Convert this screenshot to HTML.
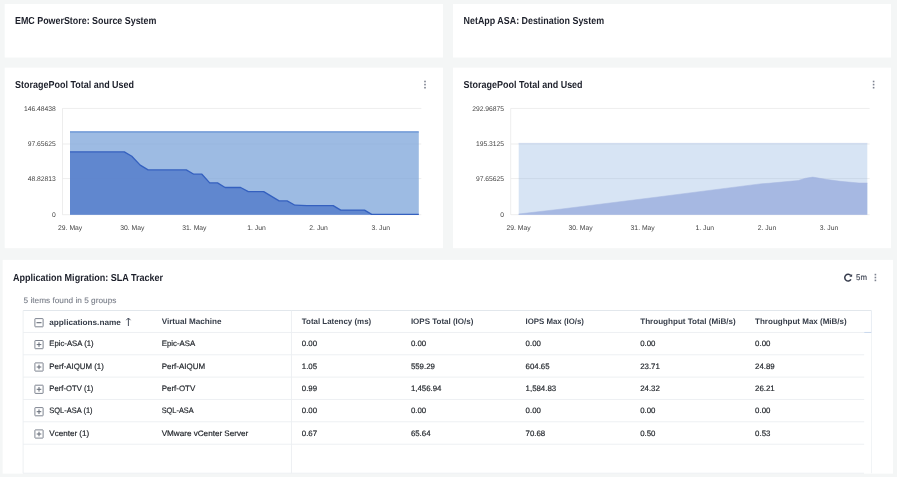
<!DOCTYPE html>
<html lang="en"><head><meta charset="utf-8"><title>Migration Dashboard</title>
<style>html,body{margin:0;padding:0;background:#f4f6f6;overflow:hidden}svg{display:block;text-rendering:geometricPrecision;will-change:transform}text{font-family:"Liberation Sans",sans-serif}</style>
</head><body>
<svg width="897" height="477" viewBox="0 0 897 477">
<rect x="0" y="0" width="897" height="477" fill="#f4f6f6"/>
<rect x="4.70" y="4.00" width="438.30" height="53.50" fill="#ffffff"/>
<rect x="453.00" y="4.00" width="438.00" height="53.50" fill="#ffffff"/>
<rect x="4.70" y="67.60" width="438.30" height="180.60" fill="#ffffff"/>
<rect x="453.00" y="67.60" width="438.00" height="180.60" fill="#ffffff"/>
<rect x="2.60" y="259.90" width="890.40" height="213.70" fill="#ffffff"/>
<text x="15.00" y="24.10" font-size="10.20" font-weight="bold" fill="#1c1f2a" text-anchor="start" textLength="141.40" lengthAdjust="spacingAndGlyphs">EMC PowerStore: Source System</text>
<text x="463.60" y="24.00" font-size="10.20" font-weight="bold" fill="#1c1f2a" text-anchor="start" textLength="140.50" lengthAdjust="spacingAndGlyphs">NetApp ASA: Destination System</text>
<text x="15.05" y="87.80" font-size="10.20" font-weight="bold" fill="#1c1f2a" text-anchor="start" textLength="119.00" lengthAdjust="spacingAndGlyphs">StoragePool Total and Used</text>
<text x="463.60" y="87.80" font-size="10.20" font-weight="bold" fill="#1c1f2a" text-anchor="start" textLength="119.00" lengthAdjust="spacingAndGlyphs">StoragePool Total and Used</text>
<text x="13.00" y="281.30" font-size="10.20" font-weight="bold" fill="#1c1f2a" text-anchor="start" textLength="150.00" lengthAdjust="spacingAndGlyphs">Application Migration: SLA Tracker</text>
<rect x="424.20" y="80.70" width="1.60" height="1.60" fill="#7d8290"/>
<rect x="424.20" y="83.80" width="1.60" height="1.60" fill="#7d8290"/>
<rect x="424.20" y="86.90" width="1.60" height="1.60" fill="#7d8290"/>
<rect x="872.80" y="80.70" width="1.60" height="1.60" fill="#7d8290"/>
<rect x="872.80" y="83.80" width="1.60" height="1.60" fill="#7d8290"/>
<rect x="872.80" y="86.90" width="1.60" height="1.60" fill="#7d8290"/>
<rect x="874.60" y="273.80" width="1.60" height="1.60" fill="#7d8290"/>
<rect x="874.60" y="276.70" width="1.60" height="1.60" fill="#7d8290"/>
<rect x="874.60" y="279.60" width="1.60" height="1.60" fill="#7d8290"/>
<rect x="62.50" y="107.95" width="358.80" height="0.7" fill="#e6e6e6"/>
<rect x="62.50" y="143.65" width="358.80" height="0.7" fill="#e6e6e6"/>
<rect x="62.50" y="178.35" width="358.80" height="0.7" fill="#e6e6e6"/>
<rect x="62.50" y="214.45" width="358.80" height="0.7" fill="#e6e6e6"/>
<rect x="62.15" y="108.30" width="0.7" height="106.50" fill="#e6e6e6"/>
<text x="55.80" y="110.65" font-size="6.75" font-weight="normal" fill="#444444" text-anchor="end">146.48438</text>
<text x="55.80" y="146.35" font-size="6.75" font-weight="normal" fill="#444444" text-anchor="end">97.65625</text>
<text x="55.80" y="181.05" font-size="6.75" font-weight="normal" fill="#444444" text-anchor="end">48.82813</text>
<text x="55.80" y="217.15" font-size="6.75" font-weight="normal" fill="#444444" text-anchor="end">0</text>
<text x="70.20" y="229.90" font-size="6.80" font-weight="normal" fill="#444444" text-anchor="middle">29. May</text>
<text x="132.30" y="229.90" font-size="6.80" font-weight="normal" fill="#444444" text-anchor="middle">30. May</text>
<text x="194.40" y="229.90" font-size="6.80" font-weight="normal" fill="#444444" text-anchor="middle">31. May</text>
<text x="256.50" y="229.90" font-size="6.80" font-weight="normal" fill="#444444" text-anchor="middle">1. Jun</text>
<text x="318.60" y="229.90" font-size="6.80" font-weight="normal" fill="#444444" text-anchor="middle">2. Jun</text>
<text x="380.70" y="229.90" font-size="6.80" font-weight="normal" fill="#444444" text-anchor="middle">3. Jun</text>
<path d="M70.00 214.80 L70.00 131.90 L418.80 131.90 L418.80 214.80 Z" fill="rgba(124,164,217,0.75)"/>
<path d="M70.00 131.90 L418.80 131.90" fill="none" stroke="#5f8dd2" stroke-width="1.40" stroke-linejoin="round"/>
<path d="M70.00 214.80 L70.00 151.90 L124.30 151.90 L131.80 156.30 L140.20 165.10 L148.10 169.90 L186.30 169.90 L193.80 174.20 L201.90 174.20 L209.70 182.90 L217.50 182.90 L225.10 187.50 L240.60 187.50 L248.30 191.60 L263.70 191.60 L279.10 200.90 L287.10 200.90 L295.00 205.20 L307.00 205.60 L333.20 205.60 L340.70 210.10 L364.50 210.10 L371.70 214.40 L418.80 214.40 L418.80 214.80 Z" fill="rgba(86,126,203,0.85)"/>
<path d="M70.00 151.90 L124.30 151.90 L131.80 156.30 L140.20 165.10 L148.10 169.90 L186.30 169.90 L193.80 174.20 L201.90 174.20 L209.70 182.90 L217.50 182.90 L225.10 187.50 L240.60 187.50 L248.30 191.60 L263.70 191.60 L279.10 200.90 L287.10 200.90 L295.00 205.20 L307.00 205.60 L333.20 205.60 L340.70 210.10 L364.50 210.10 L371.70 214.40 L418.80 214.40" fill="none" stroke="#3460bf" stroke-width="1.30" stroke-linejoin="round"/>
<rect x="510.80" y="107.95" width="358.80" height="0.7" fill="#e6e6e6"/>
<rect x="510.80" y="143.65" width="358.80" height="0.7" fill="#e6e6e6"/>
<rect x="510.80" y="178.35" width="358.80" height="0.7" fill="#e6e6e6"/>
<rect x="510.80" y="214.45" width="358.80" height="0.7" fill="#e6e6e6"/>
<rect x="510.45" y="108.30" width="0.7" height="106.50" fill="#e6e6e6"/>
<text x="504.10" y="110.65" font-size="6.75" font-weight="normal" fill="#444444" text-anchor="end">292.96875</text>
<text x="504.10" y="146.35" font-size="6.75" font-weight="normal" fill="#444444" text-anchor="end">195.3125</text>
<text x="504.10" y="181.05" font-size="6.75" font-weight="normal" fill="#444444" text-anchor="end">97.65625</text>
<text x="504.10" y="217.15" font-size="6.75" font-weight="normal" fill="#444444" text-anchor="end">0</text>
<text x="518.50" y="229.90" font-size="6.80" font-weight="normal" fill="#444444" text-anchor="middle">29. May</text>
<text x="580.60" y="229.90" font-size="6.80" font-weight="normal" fill="#444444" text-anchor="middle">30. May</text>
<text x="642.70" y="229.90" font-size="6.80" font-weight="normal" fill="#444444" text-anchor="middle">31. May</text>
<text x="704.80" y="229.90" font-size="6.80" font-weight="normal" fill="#444444" text-anchor="middle">1. Jun</text>
<text x="766.90" y="229.90" font-size="6.80" font-weight="normal" fill="#444444" text-anchor="middle">2. Jun</text>
<text x="829.00" y="229.90" font-size="6.80" font-weight="normal" fill="#444444" text-anchor="middle">3. Jun</text>
<path d="M518.70 214.80 L518.70 143.40 L867.30 143.40 L867.30 214.80 Z" fill="rgba(124,164,217,0.30)"/>
<path d="M518.70 143.40 L867.30 143.40" fill="none" stroke="#c9d6ee" stroke-width="0.80" stroke-linejoin="round"/>
<path d="M518.70 214.80 L518.70 214.00 L560.00 209.20 L660.00 196.70 L760.00 183.90 L768.30 183.30 L798.30 180.50 L805.30 178.30 L812.80 177.10 L827.00 179.50 L840.30 181.30 L858.90 183.00 L867.30 183.00 L867.30 214.80 Z" fill="rgba(150,170,220,0.75)"/>
<path d="M518.70 214.00 L560.00 209.20 L660.00 196.70 L760.00 183.90 L768.30 183.30 L798.30 180.50 L805.30 178.30 L812.80 177.10 L827.00 179.50 L840.30 181.30 L858.90 183.00 L867.30 183.00" fill="none" stroke="#a6b7e1" stroke-width="0.50" stroke-linejoin="round"/>
<rect x="23.10" y="310.05" width="848.30" height="0.9" fill="#dfe5ea"/>
<rect x="22.65" y="310.50" width="0.9" height="162.70" fill="#ebeef1"/>
<rect x="870.95" y="310.50" width="0.9" height="21.90" fill="#e6ecf2"/>
<rect x="870.95" y="332.40" width="0.9" height="140.80" fill="#eff2f5"/>
<rect x="23.10" y="472.75" width="840.90" height="0.9" fill="#ebeef1"/>
<rect x="23.10" y="331.95" width="841.10" height="0.9" fill="#ebeef1"/>
<rect x="23.10" y="354.35" width="841.10" height="0.9" fill="#ebeef1"/>
<rect x="23.10" y="376.65" width="841.10" height="0.9" fill="#ebeef1"/>
<rect x="23.10" y="398.95" width="841.10" height="0.9" fill="#ebeef1"/>
<rect x="23.10" y="421.35" width="841.10" height="0.9" fill="#ebeef1"/>
<rect x="23.10" y="443.75" width="841.10" height="0.9" fill="#ebeef1"/>
<rect x="864.2" y="331.95" width="7.2" height="0.9" fill="#c3d3ea"/>
<rect x="290.95" y="310.50" width="0.9" height="162.70" fill="#ebeef1"/>
<text x="23.50" y="303.20" font-size="8.00" font-weight="normal" fill="#777c87" text-anchor="start" stroke="#777c87" stroke-width="0.10" textLength="92.90" lengthAdjust="spacingAndGlyphs">5 items found in 5 groups</text>
<text x="49.30" y="324.90" font-size="8.00" font-weight="bold" fill="#373e4a" text-anchor="start" textLength="71.50" lengthAdjust="spacingAndGlyphs">applications.name</text>
<text x="161.70" y="323.80" font-size="8.00" font-weight="bold" fill="#373e4a" text-anchor="start" textLength="59.80" lengthAdjust="spacingAndGlyphs">Virtual Machine</text>
<text x="301.80" y="323.80" font-size="8.00" font-weight="bold" fill="#373e4a" text-anchor="start" textLength="69.40" lengthAdjust="spacingAndGlyphs">Total Latency (ms)</text>
<text x="410.90" y="323.80" font-size="8.00" font-weight="bold" fill="#373e4a" text-anchor="start" textLength="62.50" lengthAdjust="spacingAndGlyphs">IOPS Total (IO/s)</text>
<text x="525.60" y="323.80" font-size="8.00" font-weight="bold" fill="#373e4a" text-anchor="start" textLength="58.30" lengthAdjust="spacingAndGlyphs">IOPS Max (IO/s)</text>
<text x="640.20" y="323.80" font-size="8.00" font-weight="bold" fill="#373e4a" text-anchor="start" textLength="95.50" lengthAdjust="spacingAndGlyphs">Throughput Total (MiB/s)</text>
<text x="755.10" y="323.80" font-size="8.00" font-weight="bold" fill="#373e4a" text-anchor="start" textLength="91.60" lengthAdjust="spacingAndGlyphs">Throughput Max (MiB/s)</text>
<path d="M128.4 326.0 V318.0 M126.3 320.2 L128.4 318.0 L130.5 320.2" fill="none" stroke="#4b5260" stroke-width="1.0"/>
<rect x="34.90" y="318.60" width="8.2" height="8.2" rx="0.4" fill="#fff" stroke="#7f8591" stroke-width="1.0"/>
<path d="M36.50 322.70 h5.0" stroke="#626975" stroke-width="1.1" fill="none"/>
<rect x="34.90" y="340.50" width="8.2" height="8.2" rx="0.4" fill="#fff" stroke="#7f8591" stroke-width="1.0"/>
<path d="M36.70 344.60 h4.6 M39.00 342.30 v4.6" stroke="#626975" stroke-width="1.0" fill="none"/>
<text x="49.30" y="346.10" font-size="7.85" font-weight="normal" fill="#1f2329" text-anchor="start" stroke="#1f2329" stroke-width="0.18" textLength="44.30" lengthAdjust="spacingAndGlyphs">Epic-ASA (1)</text>
<text x="161.70" y="346.10" font-size="7.85" font-weight="normal" fill="#1f2329" text-anchor="start" stroke="#1f2329" stroke-width="0.18" textLength="33.50" lengthAdjust="spacingAndGlyphs">Epic-ASA</text>
<text x="301.80" y="346.10" font-size="7.85" font-weight="normal" fill="#1f2329" text-anchor="start" stroke="#1f2329" stroke-width="0.18">0.00</text>
<text x="410.90" y="346.10" font-size="7.85" font-weight="normal" fill="#1f2329" text-anchor="start" stroke="#1f2329" stroke-width="0.18">0.00</text>
<text x="525.60" y="346.10" font-size="7.85" font-weight="normal" fill="#1f2329" text-anchor="start" stroke="#1f2329" stroke-width="0.18">0.00</text>
<text x="640.20" y="346.10" font-size="7.85" font-weight="normal" fill="#1f2329" text-anchor="start" stroke="#1f2329" stroke-width="0.18">0.00</text>
<text x="755.10" y="346.10" font-size="7.85" font-weight="normal" fill="#1f2329" text-anchor="start" stroke="#1f2329" stroke-width="0.18">0.00</text>
<rect x="34.90" y="362.90" width="8.2" height="8.2" rx="0.4" fill="#fff" stroke="#7f8591" stroke-width="1.0"/>
<path d="M36.70 367.00 h4.6 M39.00 364.70 v4.6" stroke="#626975" stroke-width="1.0" fill="none"/>
<text x="49.30" y="368.50" font-size="7.85" font-weight="normal" fill="#1f2329" text-anchor="start" stroke="#1f2329" stroke-width="0.18" textLength="54.50" lengthAdjust="spacingAndGlyphs">Perf-AIQUM (1)</text>
<text x="161.70" y="368.50" font-size="7.85" font-weight="normal" fill="#1f2329" text-anchor="start" stroke="#1f2329" stroke-width="0.18" textLength="43.50" lengthAdjust="spacingAndGlyphs">Perf-AIQUM</text>
<text x="301.80" y="368.50" font-size="7.85" font-weight="normal" fill="#1f2329" text-anchor="start" stroke="#1f2329" stroke-width="0.18">1.05</text>
<text x="410.90" y="368.50" font-size="7.85" font-weight="normal" fill="#1f2329" text-anchor="start" stroke="#1f2329" stroke-width="0.18">559.29</text>
<text x="525.60" y="368.50" font-size="7.85" font-weight="normal" fill="#1f2329" text-anchor="start" stroke="#1f2329" stroke-width="0.18">604.65</text>
<text x="640.20" y="368.50" font-size="7.85" font-weight="normal" fill="#1f2329" text-anchor="start" stroke="#1f2329" stroke-width="0.18">23.71</text>
<text x="755.10" y="368.50" font-size="7.85" font-weight="normal" fill="#1f2329" text-anchor="start" stroke="#1f2329" stroke-width="0.18">24.89</text>
<rect x="34.90" y="385.20" width="8.2" height="8.2" rx="0.4" fill="#fff" stroke="#7f8591" stroke-width="1.0"/>
<path d="M36.70 389.30 h4.6 M39.00 387.00 v4.6" stroke="#626975" stroke-width="1.0" fill="none"/>
<text x="49.30" y="390.80" font-size="7.85" font-weight="normal" fill="#1f2329" text-anchor="start" stroke="#1f2329" stroke-width="0.18" textLength="44.00" lengthAdjust="spacingAndGlyphs">Perf-OTV (1)</text>
<text x="161.70" y="390.80" font-size="7.85" font-weight="normal" fill="#1f2329" text-anchor="start" stroke="#1f2329" stroke-width="0.18" textLength="33.50" lengthAdjust="spacingAndGlyphs">Perf-OTV</text>
<text x="301.80" y="390.80" font-size="7.85" font-weight="normal" fill="#1f2329" text-anchor="start" stroke="#1f2329" stroke-width="0.18">0.99</text>
<text x="410.90" y="390.80" font-size="7.85" font-weight="normal" fill="#1f2329" text-anchor="start" stroke="#1f2329" stroke-width="0.18">1,456.94</text>
<text x="525.60" y="390.80" font-size="7.85" font-weight="normal" fill="#1f2329" text-anchor="start" stroke="#1f2329" stroke-width="0.18">1,584.83</text>
<text x="640.20" y="390.80" font-size="7.85" font-weight="normal" fill="#1f2329" text-anchor="start" stroke="#1f2329" stroke-width="0.18">24.32</text>
<text x="755.10" y="390.80" font-size="7.85" font-weight="normal" fill="#1f2329" text-anchor="start" stroke="#1f2329" stroke-width="0.18">26.21</text>
<rect x="34.90" y="407.60" width="8.2" height="8.2" rx="0.4" fill="#fff" stroke="#7f8591" stroke-width="1.0"/>
<path d="M36.70 411.70 h4.6 M39.00 409.40 v4.6" stroke="#626975" stroke-width="1.0" fill="none"/>
<text x="49.30" y="413.20" font-size="7.85" font-weight="normal" fill="#1f2329" text-anchor="start" stroke="#1f2329" stroke-width="0.18" textLength="43.30" lengthAdjust="spacingAndGlyphs">SQL-ASA (1)</text>
<text x="161.70" y="413.20" font-size="7.85" font-weight="normal" fill="#1f2329" text-anchor="start" stroke="#1f2329" stroke-width="0.18" textLength="32.00" lengthAdjust="spacingAndGlyphs">SQL-ASA</text>
<text x="301.80" y="413.20" font-size="7.85" font-weight="normal" fill="#1f2329" text-anchor="start" stroke="#1f2329" stroke-width="0.18">0.00</text>
<text x="410.90" y="413.20" font-size="7.85" font-weight="normal" fill="#1f2329" text-anchor="start" stroke="#1f2329" stroke-width="0.18">0.00</text>
<text x="525.60" y="413.20" font-size="7.85" font-weight="normal" fill="#1f2329" text-anchor="start" stroke="#1f2329" stroke-width="0.18">0.00</text>
<text x="640.20" y="413.20" font-size="7.85" font-weight="normal" fill="#1f2329" text-anchor="start" stroke="#1f2329" stroke-width="0.18">0.00</text>
<text x="755.10" y="413.20" font-size="7.85" font-weight="normal" fill="#1f2329" text-anchor="start" stroke="#1f2329" stroke-width="0.18">0.00</text>
<rect x="34.90" y="429.90" width="8.2" height="8.2" rx="0.4" fill="#fff" stroke="#7f8591" stroke-width="1.0"/>
<path d="M36.70 434.00 h4.6 M39.00 431.70 v4.6" stroke="#626975" stroke-width="1.0" fill="none"/>
<text x="49.30" y="435.50" font-size="7.85" font-weight="normal" fill="#1f2329" text-anchor="start" stroke="#1f2329" stroke-width="0.18" textLength="39.90" lengthAdjust="spacingAndGlyphs">Vcenter (1)</text>
<text x="161.70" y="435.50" font-size="7.85" font-weight="normal" fill="#1f2329" text-anchor="start" stroke="#1f2329" stroke-width="0.18" textLength="86.60" lengthAdjust="spacingAndGlyphs">VMware vCenter Server</text>
<text x="301.80" y="435.50" font-size="7.85" font-weight="normal" fill="#1f2329" text-anchor="start" stroke="#1f2329" stroke-width="0.18">0.67</text>
<text x="410.90" y="435.50" font-size="7.85" font-weight="normal" fill="#1f2329" text-anchor="start" stroke="#1f2329" stroke-width="0.18">65.64</text>
<text x="525.60" y="435.50" font-size="7.85" font-weight="normal" fill="#1f2329" text-anchor="start" stroke="#1f2329" stroke-width="0.18">70.68</text>
<text x="640.20" y="435.50" font-size="7.85" font-weight="normal" fill="#1f2329" text-anchor="start" stroke="#1f2329" stroke-width="0.18">0.50</text>
<text x="755.10" y="435.50" font-size="7.85" font-weight="normal" fill="#1f2329" text-anchor="start" stroke="#1f2329" stroke-width="0.18">0.53</text>
<path d="M850.74 275.54 A3.35 3.35 0 1 0 850.94 279.38" fill="none" stroke="#363c4c" stroke-width="1.5"/>
<path d="M852.1 274.0 V276.7 H849.4 Z" fill="#363c4c"/>
<text x="856.10" y="280.30" font-size="8.20" font-weight="normal" fill="#424857" text-anchor="start" stroke="#424857" stroke-width="0.15" textLength="10.90" lengthAdjust="spacingAndGlyphs">5m</text>
</svg>
</body></html>
